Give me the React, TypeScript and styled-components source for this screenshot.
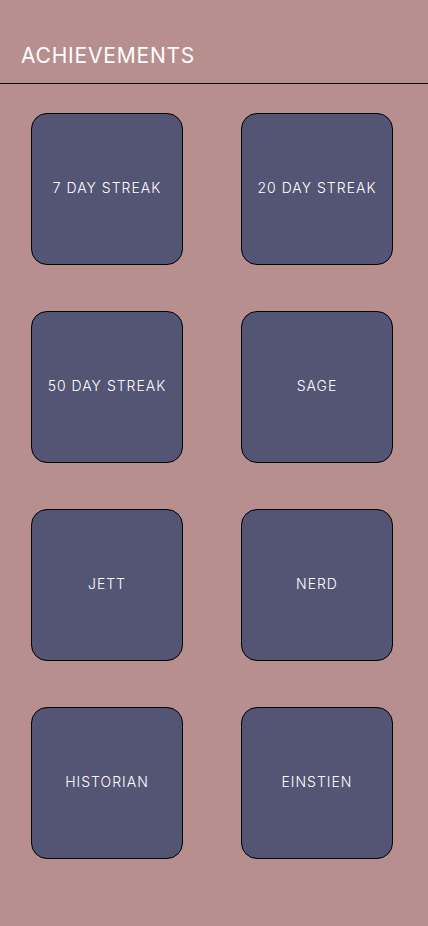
import React from "react"
import styled, { createGlobalStyle } from "styled-components"

const GlobalStyle = createGlobalStyle`
    html, body {
        margin: 0;
        padding: 0;
        background: #b78f8e;
        font-family: Inter, "Noto Sans", sans-serif;
    }
`

const Page = styled.div`
    min-height: 926px;
    background: #b78f8e;
`

const Header = styled.header`
    padding: 44px 0 15px 21px;
    border-bottom: 1px solid #000;
`

const Title = styled.h1`
    margin: 0;
    font-size: 21px;
    line-height: 24px;
    font-weight: 400;
    letter-spacing: 0.8px;
    color: #fff;
`

const Grid = styled.div`
    display: grid;
    grid-template-columns: repeat(2, 152px);
    column-gap: 58px;
    row-gap: 46px;
    padding: 29px 0 0 31px;
`

const Badge = styled.div`
    box-sizing: border-box;
    width: 152px;
    height: 152px;
    padding-bottom: 3px;
    display: flex;
    align-items: center;
    justify-content: center;
    background: #545474;
    border: 1px solid #000;
    border-radius: 16px;
    color: #fff;
    font-size: 14px;
    font-weight: 300;
    letter-spacing: 1px;
`

const achievements = [
    "7 DAY STREAK",
    "20 DAY STREAK",
    "50 DAY STREAK",
    "SAGE",
    "JETT",
    "NERD",
    "HISTORIAN",
    "EINSTIEN",
]

export default function App() {
    return <Page>
        <GlobalStyle />
        <Header>
            <Title>ACHIEVEMENTS</Title>
        </Header>
        <Grid>
            {achievements.map(name => <Badge key={name}>{name}</Badge>)}
        </Grid>
    </Page>
}
